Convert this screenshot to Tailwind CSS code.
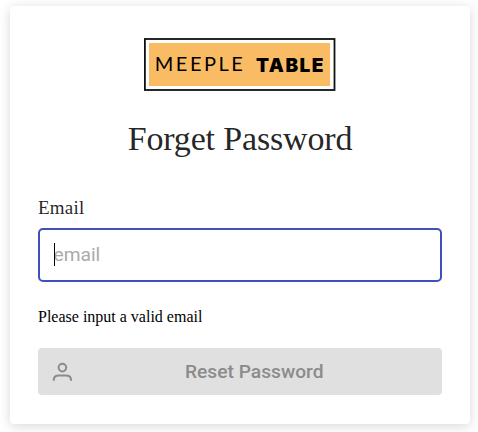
<!DOCTYPE html>
<html lang="en"><head><meta charset="utf-8"><title>Forget Password</title>
<script src="https://cdn.jsdelivr.net/npm/@tailwindcss/browser@4"></script></head>
<body class="bg-white h-[432px] overflow-hidden pt-[6px] pl-[10px] font-['Liberation_Serif',serif]">
<main class="w-[460px] h-[418px] rounded-[4px] bg-white px-7 pt-8 shadow-[0_2px_12px_rgba(0,0,0,0.16)] flex flex-col">
<svg class="block mx-auto w-[192px] h-[54px] shrink-0" viewBox="0 0 192 54" role="img" aria-label="Meeple Table">
<rect x="0.9" y="1" width="189.6" height="51" fill="#fff" stroke="#111" stroke-width="1.8"/><rect x="5" y="5" width="181" height="43" fill="#f9bc64"/>
<text x="10.8" y="33.3" font-family="Lato" font-size="20" textLength="88" fill="#000">MEEPLE</text>
<text x="112" y="33.5" font-family="Inter" font-weight="900" font-size="19" textLength="67.5" fill="#000">TABLE</text></svg>
<h1 class="mt-[27px] h-[40px] text-center text-[34px] leading-[40px] tracking-[-0.15px] text-black/87">Forget Password</h1>
<label class="mt-[37px] text-[19px] leading-[24px] tracking-[0.2px] text-black/87">Email</label>
<div class="mt-[8px] h-[54px] shrink-0 rounded-[5px] border-2 border-[#3f51b5] px-[13.5px] flex items-center relative text-[19.2px] font-['Roboto',sans-serif] text-[#aaa]"><span class="absolute left-[14px] top-[13px] w-px h-[23px] bg-black"></span>email</div>
<p class="mt-[25px] text-[16px] leading-[20px] text-black">Please input a valid email</p>
<div class="mt-[21px] h-[47px] shrink-0 rounded-[4px] bg-[#e0e0e0] text-[#8b8b8b] flex items-center pl-[12px] font-['Roboto',sans-serif]">
<svg class="w-6 h-6" viewBox="0 0 24 24" fill="none" stroke="currentColor" stroke-width="2"><circle cx="12.4" cy="7.6" r="3.8"/><path d="M3.8 20.8v-1c0-2.8 2.2-4.4 5.2-4.4h6.8c3 0 5.2 1.6 5.2 4.4v1"/></svg>
<span class="ml-[111px] pt-[2px] text-[19.2px] font-medium whitespace-nowrap">Reset Password</span></div>
</main></body></html>
